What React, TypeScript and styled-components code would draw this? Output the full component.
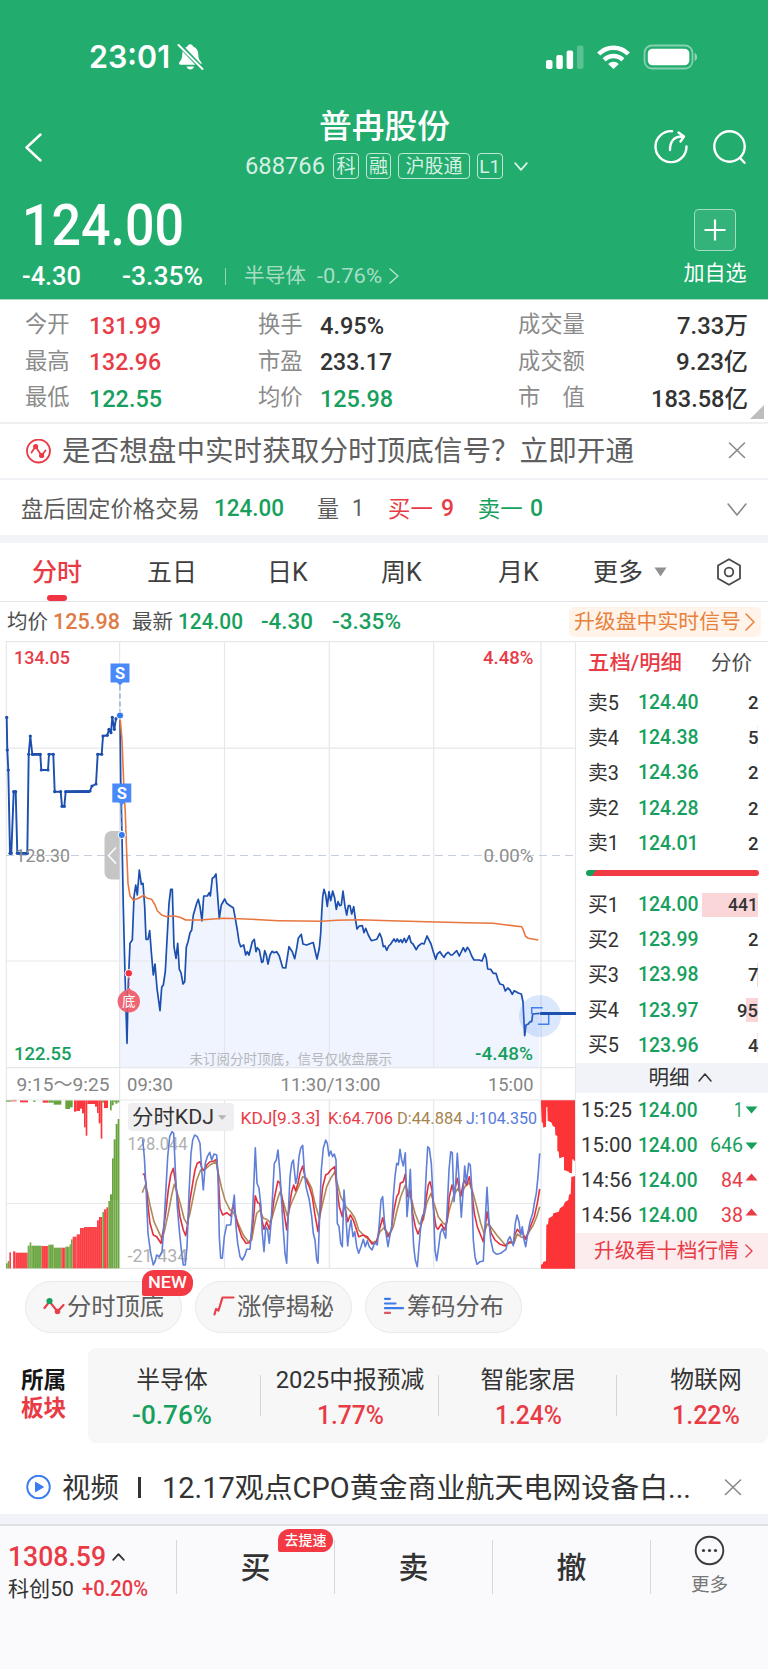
import React, { useLayoutEffect, useRef, useState } from "react";
import styled, { createGlobalStyle } from "styled-components";

const RED = "#e93b46";
const GREEN = "#17a05d";
const INK = "#333333";

const GlobalStyle = createGlobalStyle`
  * { box-sizing: border-box; }
  html, body { margin: 0; padding: 0; background: #fff; }
  body {
    width: 768px;
    font-family: Roboto, "Noto Sans CJK SC", sans-serif;
    color: ${INK};
    line-height: 1;
  }
`;

/* Condensed text: drawn in a box of a set width, glyphs squeezed to fill it. */
const FitBox = styled.span<{ $w: number; $size: number; $color?: string; $weight?: number }>`
  display: inline-block;
  flex: none;
  width: ${(p) => p.$w}px;
  font-size: ${(p) => p.$size}px;
  line-height: ${(p) => Math.round(p.$size * 1.2)}px;
  color: ${(p) => p.$color || "inherit"};
  font-weight: ${(p) => p.$weight || 400};
  white-space: nowrap;
`;
const FitInner = styled.span`
  display: inline-block;
  transform-origin: 0 50%;
`;

type FitProps = {
  w: number;
  size: number;
  color?: string;
  weight?: number;
  className?: string;
  children: React.ReactNode;
};

function Fit({ w, size, color, weight, className, children }: FitProps) {
  const ref = useRef<HTMLSpanElement>(null);
  const [scale, setScale] = useState(1);
  useLayoutEffect(() => {
    if (ref.current) {
      const natural = ref.current.getBoundingClientRect().width;
      if (natural > 0) setScale(w / natural);
    }
  }, [w]);
  return (
    <FitBox $w={w} $size={size} $color={color} $weight={weight} className={className}>
      <FitInner ref={ref} style={{ transform: `scaleX(${scale})` }}>
        {children}
      </FitInner>
    </FitBox>
  );
}

const Gap = styled.span<{ $w: number }>`
  flex: none;
  width: ${(p) => p.$w}px;
`;

const Page = styled.main`
  width: 768px;
  height: 1669px;
  display: flex;
  flex-direction: column;
  overflow: hidden;
  background: #fff;
`;

/* ---------- Header ---------- */

const Header = styled.header`
  height: 300px;
  flex: none;
  background: #22ac6e;
  color: #fff;
  border-bottom: 1px solid #a5dfc4;
`;
const StatusBar = styled.div`
  height: 100px;
  padding: 14px 70px 0 89px;
  display: flex;
  align-items: center;
`;
const Clock = styled(Fit)`
  font-family: Inter, sans-serif;
`;
const StatusIcons = styled.div`
  margin-left: auto;
  display: flex;
`;
const TitleBar = styled.div`
  height: 90px;
  display: grid;
  grid-template-columns: 120px 1fr 120px;
`;
const BackArea = styled.div`
  padding: 33px 0 0 25px;
`;
const TitleArea = styled.div`
  display: flex;
  flex-direction: column;
  align-items: center;
`;
const StockName = styled.div`
  height: 53px;
  display: flex;
  align-items: center;
`;
const CodeRow = styled.div`
  height: 26px;
  display: flex;
  align-items: center;
  color: rgba(255, 255, 255, 0.84);
  margin-left: 5px;
`;
const Tag = styled.span<{ $w: number }>`
  width: ${(p) => p.$w}px;
  height: 26px;
  margin-right: 7px;
  border: 1.4px solid rgba(255, 255, 255, 0.7);
  border-radius: 4px;
  display: flex;
  align-items: center;
  justify-content: center;
  font-size: 19px;
`;
const HeaderIcons = styled.div`
  padding: 28px 0 0 4px;
  display: flex;
  gap: 23px;
`;
const PriceBar = styled.div`
  height: 109px;
  padding: 3px 20px 0 22px;
  display: flex;
  justify-content: space-between;
`;
const PriceRow = styled.div`
  height: 69px;
  padding-bottom: 3px;
  display: flex;
  align-items: center;
`;
const ChangeRow = styled.div`
  height: 28px;
  display: flex;
  align-items: center;
`;
const Rule = styled.span<{ $w?: number; $h: number; $c: string }>`
  flex: none;
  width: ${(p) => p.$w || 1}px;
  height: ${(p) => p.$h}px;
  background: ${(p) => p.$c};
`;
const AddBox = styled.div`
  width: 66px;
  padding-top: 16px;
  display: flex;
  flex-direction: column;
  align-items: center;
  gap: 12px;
  font-size: 21px;
`;
const PlusButton = styled.div`
  width: 42px;
  height: 42px;
  border: 1.4px solid rgba(255, 255, 255, 0.55);
  border-radius: 5px;
  background: rgba(255, 255, 255, 0.08);
  display: flex;
  align-items: center;
  justify-content: center;
`;

/* ---------- Quote figures ---------- */

const Figures = styled.section`
  position: relative;
  height: 124px;
  flex: none;
  padding: 6px 20px 0 25px;
  border-bottom: 2px solid #eeeff1;
`;
const FigureRow = styled.div`
  height: 36.5px;
  display: grid;
  grid-template-columns: 64px 169px 62px 198px 68px 1fr;
  align-items: center;
`;
const FigureLabel = styled.span`
  font-size: 22.3px;
  line-height: 28px;
  color: #8b8b8b;
  white-space: pre;
`;
const FigureValue = styled.span<{ $c?: string; $end?: boolean }>`
  display: flex;
  align-items: center;
  justify-content: ${(p) => (p.$end ? "flex-end" : "flex-start")};
  padding-top: 3px;
  color: ${(p) => p.$c || INK};
`;
const Corner = styled.i`
  position: absolute;
  right: 4px;
  bottom: 3px;
  border: 7px solid transparent;
  border-right-color: #bdbdbd;
  border-bottom-color: #bdbdbd;
`;

const NoticeRow = styled.section`
  height: 56px;
  flex: none;
  padding: 0 22px 0 26px;
  display: flex;
  align-items: center;
  border-bottom: 2px solid #f1f2f5;
  font-size: 28.6px;
  color: #5f5f5f;
  svg:last-child { margin-left: auto; }
`;
const AfterHours = styled.section`
  height: 55px;
  flex: none;
  padding: 3px 21px 0;
  display: flex;
  align-items: center;
  font-size: 22.4px;
  color: #5c5c5c;
  svg { margin-left: auto; }
`;
const Band = styled.div<{ $h: number }>`
  height: ${(p) => p.$h}px;
  flex: none;
  background: #f2f3f8;
`;
const Tinted = styled.span<{ $c: string }>`
  color: ${(p) => p.$c};
`;

/* ---------- Tabs ---------- */

const Tabs = styled.nav`
  height: 59px;
  flex: none;
  padding-left: 32px;
  display: grid;
  grid-template-columns: 115px 120px 114px 117px 95px 123px 52px;
  border-bottom: 1px solid #e2e3e6;
  font-size: 25px;
  color: #3e3e3e;
`;
const Tab = styled.div<{ $active?: boolean }>`
  display: flex;
  flex-direction: column;
  justify-content: space-between;
  color: ${(p) => (p.$active ? RED : "inherit")};
  font-weight: ${(p) => (p.$active ? 500 : 400)};
`;
const TabLabel = styled.span`
  height: 58px;
  display: flex;
  align-items: center;
  gap: 11px;
  white-space: nowrap;
`;
const ActiveMark = styled.i`
  flex: none;
  width: 20px;
  height: 6px;
  margin: -6px 0 0 15px;
  border-radius: 3px;
  background: #f23343;
`;
const InfoRow = styled.div`
  height: 39px;
  flex: none;
  padding: 1px 7px 0;
  display: flex;
  align-items: center;
  font-size: 20.4px;
  color: #505050;
`;
const UpgradeTag = styled.span`
  margin-left: auto;
  width: 192px;
  height: 30px;
  padding-left: 5px;
  display: flex;
  align-items: center;
  gap: 4px;
  border-radius: 5px;
  background: #fff3ea;
  color: #e8813c;
  font-size: 20.8px;
  white-space: nowrap;
`;

/* ---------- Chart and order book ---------- */

const Board = styled.section`
  height: 628px;
  flex: none;
  display: flex;
`;
const Book = styled.aside`
  width: 192px;
  display: flex;
  flex-direction: column;
  border-top: 1px solid #e3e5e9;
`;
const BookHead = styled.div`
  height: 43px;
  padding: 0 16px 0 12px;
  display: flex;
  align-items: center;
  justify-content: space-between;
  font-size: 20.5px;
  color: #4a4a4a;
`;
const Levels = styled.div`
  padding-bottom: 9.5px;
`;
const Level = styled.div`
  height: 35.2px;
  padding-left: 12px;
  display: grid;
  grid-template-columns: 50px 64px 56px;
  align-items: center;
  font-size: 19.6px;
  line-height: 24px;
`;
const LevelSize = styled.span<{ $bar: number }>`
  height: 24px;
  display: flex;
  align-items: center;
  justify-content: flex-end;
  background: linear-gradient(#fbd6d9, #fbd6d9) right / ${(p) => p.$bar}px 100% no-repeat;
  font-size: 19px;
  font-weight: 500;
`;
const RatioBar = styled.div`
  height: 6px;
  flex: none;
  margin: 0 9px 10.5px 10px;
  border-radius: 3px;
  background: linear-gradient(125deg, ${GREEN} 0 8px, #f23a45 8.5px);
`;
const DetailHead = styled.div`
  height: 30px;
  flex: none;
  background: #f2f3f8;
  display: flex;
  align-items: center;
  justify-content: center;
  gap: 8px;
  padding-left: 16px;
  font-size: 20.5px;
`;
const Trade = styled.div<{ $c: string }>`
  height: 35.1px;
  flex: none;
  padding: 0 10px 0 5px;
  display: flex;
  align-items: center;
  color: ${(p) => p.$c};
`;
const TradeSize = styled.span<{ $up: boolean }>`
  flex: 1;
  display: flex;
  align-items: center;
  justify-content: flex-end;
  gap: 2px;
  svg { margin-bottom: ${(p) => (p.$up ? 7 : 0)}px; }
`;
const TenLevels = styled.div`
  flex: 1;
  padding-left: 18px;
  display: flex;
  align-items: center;
  gap: 6px;
  background: #fdecee;
  color: ${RED};
  font-size: 20.7px;
`;

/* ---------- Shortcuts, sectors, video ---------- */

const Chips = styled.section`
  height: 79px;
  flex: none;
  padding: 12px 25px 0;
  display: flex;
  gap: 13px;
`;
const Chip = styled.div`
  position: relative;
  width: 157px;
  height: 52px;
  padding: 0 0 0 17px;
  display: flex;
  align-items: center;
  gap: 2px;
  border: 1.5px solid #eaeaea;
  border-radius: 26px;
  background: #f7f7f7;
  font-size: 24px;
  color: #5d5d5d;
  white-space: nowrap;
  > svg { margin-bottom: 2px; }
`;
const Flag = styled.b<{ $x: number; $y: number; $w: number; $h: number }>`
  position: absolute;
  left: ${(p) => p.$x}px;
  top: ${(p) => p.$y}px;
  width: ${(p) => p.$w}px;
  height: ${(p) => p.$h}px;
  display: flex;
  align-items: center;
  justify-content: center;
  border-radius: 12px 12px 12px 2px;
  background: #f33943;
  color: #fff;
  font-weight: 500;
`;
const Sectors = styled.section`
  height: 95px;
  flex: none;
  display: flex;
`;
const SectorTitle = styled.h2`
  width: 88px;
  flex: none;
  margin: 0;
  padding: 19px 0 0 21px;
  font-size: 22.6px;
  line-height: 28px;
  font-weight: 700;
  color: #151515;
`;
const SectorList = styled.div`
  width: 680px;
  flex: none;
  overflow: hidden;
  display: grid;
  grid-template-columns: 173px 178px 178px 178px;
  background: #f7f7f7;
  border-radius: 8px;
`;
const Sector = styled.div`
  padding-top: 18px;
  display: flex;
  flex-direction: column;
  align-items: center;
  gap: 7px;
  font-size: 23.8px;
  line-height: 28px;
  background: linear-gradient(#d4d4d4, #d4d4d4) 100% 27px / 1px 41px no-repeat;
  white-space: nowrap;
  &:first-child { padding-right: 5px; }
  &:last-child { background: none; }
`;
const VideoRow = styled.section`
  height: 71px;
  flex: none;
  padding: 18px 26px 0 26px;
  display: flex;
  align-items: center;
  font-size: 28.6px;
  color: #333;
  white-space: nowrap;
  svg:last-child { margin-left: auto; }
`;

/* ---------- Bottom bar ---------- */

const BottomBar = styled.footer`
  flex: 1;
  padding-top: 14px;
  display: flex;
  align-items: flex-start;
  background: #fafafd;
  border-top: 2px solid #dfe0e5;
`;
const IndexCell = styled.div`
  width: 176px;
  padding: 1px 0 0 8px;
`;
const IndexLine = styled.div<{ $h: number }>`
  height: ${(p) => p.$h}px;
  display: flex;
  align-items: center;
`;
const Action = styled.div`
  position: relative;
  width: 158px;
  height: 54px;
  padding-top: 2px;
  display: flex;
  align-items: center;
  justify-content: center;
  border-left: 1px solid #d8d8dc;
  font-size: 30px;
  font-weight: 500;
`;
const More = styled.div`
  width: 118px;
  height: 54px;
  display: flex;
  flex-direction: column;
  align-items: center;
  gap: 10px;
  border-left: 1px solid #d8d8dc;
  font-size: 18.6px;
  color: #777;
  svg { margin-top: -5px; flex: none; }
`;

/* ---------- Small line icons ---------- */

type ChevronProps = { w: number; h: number; dir: "left" | "right" | "up" | "down"; sw?: number; color?: string };
function Chevron({ w, h, dir, sw = 2, color = "currentColor" }: ChevronProps) {
  const p = sw / 2 + 0.3;
  const d = {
    left: `M${w - p} ${p}L${p} ${h / 2}L${w - p} ${h - p}`,
    right: `M${p} ${p}L${w - p} ${h / 2}L${p} ${h - p}`,
    up: `M${p} ${h - p}L${w / 2} ${p}L${w - p} ${h - p}`,
    down: `M${p} ${p}L${w / 2} ${h - p}L${w - p} ${p}`,
  }[dir];
  return (
    <svg width={w} height={h} fill="none" stroke={color} strokeWidth={sw} strokeLinecap="round" strokeLinejoin="round">
      <path d={d} />
    </svg>
  );
}

function Cross() {
  return (
    <svg width="18" height="18" stroke="#8a8a8a" strokeWidth="1.6" strokeLinecap="round">
      <path d="M1.5 1L16.5 15.5M16.5 1L1.5 15.5" />
    </svg>
  );
}

/* ---------- Chart series ---------- */

type Pt = [number, number];
const parse = (s: string): Pt[] => s.trim().split(/\s+/).map((p) => p.split(",").map(Number) as Pt);

/* Samples are stored in thirds of a pixel, relative to the origin of each pane. */
const place = (s: string, ox: number, oy: number) =>
  parse(s).map(([x, y]) => `${(ox + x / 3).toFixed(1)},${(oy + y / 3).toFixed(1)}`).join(" ");

const PRE_OPEN = place(
  "20,232 22,330 25,390 30,640 34,640 41,455 47,455 52,640 82,640 86,343 91,288 97,343 121,343 124,390 144,390 147,343 160,343 164,455 182,455 186,499 193,499 197,455 270,453 276,438 288,432 293,343 305,343 309,288 322,286 327,268 333,278 337,232 343,268 348,236 360,226",
  0, 640
);
const PRICE =
  place(
    "360,226 362,420 366,590 370,800 375,1000 381,1210 385,1030 390,910 397,900 402,770 407,735 412,765 418,690 424,733 429,730 434,800 438,898 444,898 449,872 454,935 460,1005 465,972 471,1045 480,1112 485,1042 490,1035 496,995 501,900 507,790 512,748 517,748 522,920 528,955 533,910 538,988 543,998 549,1032 554,1025 559,922 564,905 570,878 575,870 580,825 585,808 590,790 595,778 600,800 606,843 611,768 622,768 628,758 631,768 637,715 642,712 648,702 653,770 658,836 664,795 674,777 680,790 690,797 700,803 706,835 712,870 717,905 722,920 731,915 737,945 742,935 747,945 752,925 757,905 763,898 768,935 772,923 778,930 785,967 789,965 794,932 799,945 804,972 810,945 816,934 822,938 830,935 838,948",
    0, 640
  ) +
  " " +
  place(
    "8,983 17,984 27,920 37,935 44,956 50,925 55,895 64,883 69,912 80,915 95,909 100,908 106,935 111,957 118,925 122,880 125,820 128,770 132,748 137,765 142,799 147,755 152,782 158,753 164,775 169,808 174,785 179,797 184,795 189,753 195,800 200,825 205,797 210,797 215,822 221,800 226,835 231,867 238,858 247,857 252,878 257,865 265,885 274,902 290,898 299,880 305,895 310,920 315,918 320,931 326,918 332,912 342,897 347,905 352,897 357,906 362,899 367,908 373,895 378,907 388,887 393,907 399,912 409,929 415,918 425,910 432,912 441,888 447,900 453,912 460,935 467,958 472,942 480,935 486,945 492,952 498,942 505,937 512,945 517,945 530,932 538,948 550,923 556,935 562,922 568,930 575,948 582,960 598,960 606,963 614,941 619,955 623,987 632,988 640,1000 648,1000 655,1022 660,1032 670,1035 676,1053 683,1044 690,1050 697,1063 703,1052 715,1059 724,1062 729,1085 734,1187 738,1155 745,1152 750,1145 755,1145 758,1122 778,1120",
    280, 640
  );
const AVERAGE =
  place(
    "360,230 366,300 371,430 376,520 380,640 384,730 390,768 400,780 412,776 424,770 432,766 440,774 455,778 465,795 472,812 485,825 500,830 520,827 540,832 557,840 600,840 670,835 720,836 780,839 835,842",
    0, 640
  ) +
  " " +
  place("0,842 125,844 170,841 240,839 330,842 440,845 560,848 640,850 680,855 725,860 730,870 736,888 745,895 775,900", 280, 640);

const LINE_J =
  place(
    "428,178 433,230 438,320 444,460 452,520 460,555 465,545 470,525 478,530 486,515 491,450 497,340 503,230 509,170 516,155 521,160 526,270 532,380 538,450 544,510 550,555 556,555 561,500 567,340 573,220 578,180 584,165 592,170 600,190 605,270 610,330 616,250 622,230 629,217 635,240 642,222 650,225 654,290 658,470 662,535 667,535 673,470 680,435 692,435 697,390 703,345 708,440 713,490 720,530 727,540 735,525 740,508 750,508 757,420 762,300 766,203 771,310 777,325 783,380 787,460 792,515 797,440 803,450 808,490 813,430 818,340 823,250 829,240 834,210 840,280 845,370 850,450 855,520",
    0, 1080
  ) +
  " " +
  place(
    "20,550 25,400 30,290 35,250 40,240 47,310 52,290 57,230 62,205 68,196 73,270 78,320 88,360 95,410 100,460 105,480 110,540 114,550 119,400 124,270 130,205 137,180 142,190 147,228 152,213 158,230 163,222 168,240 172,430 177,440 182,490 187,500 192,330 197,400 203,498 208,450 213,420 219,470 224,455 230,500 236,520 243,500 250,478 256,500 262,482 268,500 276,510 284,488 292,495 298,430 303,360 308,350 313,420 318,460 324,500 330,465 335,440 340,350 345,290 350,250 355,255 360,208 365,240 370,258 376,218 381,410 386,350 391,268 396,400 401,500 406,540 412,560 418,490 424,420 428,405 433,400 438,290 443,200 448,205 454,250 459,350 465,510 470,542 476,500 481,460 487,445 492,460 497,475 502,380 507,270 512,215 517,218 522,365 527,310 532,220 538,310 544,412 549,340 554,258 559,310 566,250 571,255 575,320 580,480 585,530 591,553 600,545 610,543 616,420 621,322 626,410 632,480 640,515 650,523 662,520 678,508 684,480 690,470 700,497 706,430 711,405 717,425 722,465 727,440 731,475 737,500 742,470 750,425 758,400 763,370 769,340 774,290 779,220",
    280, 1080
  );
const LINE_K =
  place(
    "428,283 433,282 438,310 443,370 450,430 460,465 470,470 483,490 490,450 497,400 505,330 512,285 520,265 527,310 533,360 540,410 550,450 557,467 563,430 570,360 578,310 585,270 592,250 600,245 606,265 612,272 620,255 630,245 642,243 650,238 655,290 660,385 668,405 680,398 692,408 700,375 706,400 713,435 725,470 738,490 750,488 757,450 762,400 766,347 773,368 779,370 786,420 792,448 800,425 808,448 815,410 822,360 830,320 834,303 840,310 848,370",
    0, 1080
  ) +
  " " +
  place(
    "20,450 28,380 35,335 41,315 47,333 54,310 60,280 68,258 76,295 88,320 97,350 104,400 114,455 120,400 128,320 137,285 145,280 152,270 164,260 170,320 178,380 187,410 193,370 203,425 211,405 220,420 228,445 236,470 250,465 262,470 276,492 290,485 298,450 308,413 316,450 324,470 334,450 342,390 350,350 356,340 361,310 370,305 376,282 382,350 391,330 398,400 406,440 414,462 422,440 430,410 438,360 445,315 450,305 456,330 462,400 468,440 474,448 484,432 494,450 502,420 508,350 516,315 522,340 532,295 542,350 552,300 560,315 568,290 575,330 583,400 592,440 610,485 616,440 621,395 627,430 634,460 645,480 660,493 676,498 690,485 700,490 706,460 712,448 720,458 726,455 737,478 745,455 755,430 763,410 772,370 779,327",
    280, 1080
  );
const LINE_D =
  place(
    "427,338 436,315 443,340 450,375 462,425 485,475 493,455 505,400 515,345 523,312 532,340 542,375 552,415 561,432 570,400 580,350 590,300 602,270 615,268 630,255 648,245 655,280 665,325 675,360 690,390 700,395 712,425 730,465 745,485 755,480 762,440 770,400 780,390 790,415 800,418 812,428 820,400 830,365 840,335 850,365",
    0, 1080
  ) +
  " " +
  place(
    "22,408 32,375 45,345 56,320 68,290 80,295 95,325 105,370 118,415 128,370 140,320 152,295 165,275 172,310 182,350 198,380 212,395 225,415 236,450 255,470 278,488 290,482 300,455 312,443 328,465 340,440 350,395 362,350 376,315 385,340 395,360 405,400 418,432 430,420 440,370 453,340 462,370 475,410 490,430 498,435 508,390 520,350 533,325 543,345 555,320 568,308 578,335 590,380 602,430 612,460 622,432 632,440 650,465 676,495 690,488 702,490 712,462 722,470 735,475 748,455 760,435 770,410 779,380",
    280, 1080
  );

/* Auction volume, as [from, to, level, is-up] runs in thirds of a pixel. */
type Run = [number, number, number, 0 | 1];
const VOLUME: Run[] = [
  [18, 23, 550, 0], [23, 28, 543, 0], [28, 33, 517, 1], [39, 46, 514, 1], [46, 83, 518, 1], [83, 89, 497, 0],
  [89, 94, 487, 0], [94, 125, 497, 0], [125, 145, 498, 1], [145, 161, 494, 0], [161, 184, 503, 0], [184, 196, 503, 1],
  [196, 209, 500, 0], [209, 213, 493, 0], [213, 218, 478, 0], [218, 230, 470, 1], [230, 240, 463, 1], [240, 252, 444, 1],
  [252, 291, 441, 1], [291, 297, 421, 1], [297, 307, 411, 1], [307, 312, 396, 0], [312, 319, 388, 1], [319, 325, 382, 1],
  [325, 330, 363, 0], [330, 336, 343, 0], [336, 341, 235, 0], [341, 347, 178, 0], [347, 353, 132, 0], [353, 358, 117, 0],
];
const UNMATCHED: Run[] = [
  [18, 33, 65, 0], [33, 50, 64, 1], [60, 84, 67, 1], [100, 106, 66, 0], [128, 145, 68, 1], [145, 161, 68, 0],
  [161, 184, 74, 0], [196, 210, 87, 0], [210, 218, 82, 0], [222, 229, 95, 1], [229, 240, 93, 1], [240, 246, 86, 1],
  [246, 252, 100, 1], [252, 257, 142, 1], [257, 262, 167, 1], [262, 285, 72, 1], [285, 291, 80, 1], [291, 296, 99, 1],
  [296, 302, 130, 1], [302, 307, 176, 1], [307, 312, 68, 0], [312, 324, 84, 1], [330, 335, 91, 0], [335, 341, 76, 0],
  [341, 346, 66, 0], [346, 352, 71, 0], [352, 358, 67, 0],
];

type LabelProps = { x: number; y: number; w: number; size?: number; c: string; weight?: number; children: string };
function Label({ x, y, w, size = 19, c, weight = 400, children }: LabelProps) {
  return (
    <text x={x} y={y} textLength={w} lengthAdjust="spacingAndGlyphs" fontSize={size} fill={c} fontWeight={weight}>
      {children}
    </text>
  );
}

const PlotSvg = styled.svg`
  display: block;
  flex: none;
  font-family: Roboto, "Noto Sans CJK SC", sans-serif;
`;

function SellMark({ x, y, dotX, dotY }: { x: number; y: number; dotX: number; dotY: number }) {
  return (
    <g>
      <path d={`M${dotX} ${y + 22}V${dotY}`} stroke="#6d8cc8" strokeWidth="1" strokeDasharray="5 3" />
      <path d={`M${x} ${y}h19v19h-6.5l-3 3l-3 -3h-6.5z`} fill="#4a8af8" />
      <text x={x + 9.5} y={y + 15.2} textAnchor="middle" fontSize="16.5" fontWeight="700" fill="#fff">S</text>
      <circle cx={dotX} cy={dotY} r="3.6" fill="#3478f0" stroke="#fff" strokeWidth="1" />
    </g>
  );
}

function Plot() {
  const grid = "#e6e7ea";
  return (
    <PlotSvg width="576" height="628" viewBox="0 641 576 628">
      <polygon points={`${PRICE} 539.3,1067 120,1067`} fill="#eff4fe" />
      <g stroke={grid} strokeWidth="1.2" fill="none">
        <path d="M6 641.6H576M6 748.2H575.5M6 961H575.5M6 1067.6H575.5M6 1100H575.5M6 1203.5H541M6 1268.3H575.5" />
        <path d="M6.3 641V1268M119.6 641V1268M224.5 641V1068M329.3 641V1068M433.7 641V1068M541 641V1268M575.5 641V1268" />
        <path d="M224.5 1100V1268M329.3 1100V1268M433.7 1100V1268" />
      </g>
      <path d="M6 855.5H575" stroke="#c6cddb" strokeWidth="1.2" strokeDasharray="8 5" />

      <Label x={14} y={663.6} w={56} c={RED} weight={500}>134.05</Label>
      <Label x={483} y={663.6} w={50.5} c={RED} weight={500}>4.48%</Label>
      <Label x={483.5} y={862.2} w={50} c="#8d8d8d">0.00%</Label>
      <Label x={14} y={1059.8} w={57.5} c={GREEN} weight={500}>122.55</Label>
      <Label x={475} y={1059.8} w={58} c={GREEN} weight={500}>-4.48%</Label>
      <Label x={189.5} y={1064} w={202.5} size={13.8} c="#b5b7bc">未订阅分时顶底，信号仅收盘展示</Label>

      <polyline points={PRE_OPEN} fill="none" stroke="#1c4fae" strokeWidth="1.9" strokeLinejoin="round" />
      <g fill="#1c4fae">
        {PRE_OPEN.split(" ").map((p, i) => {
          const [x, y] = p.split(",");
          return <circle key={i} cx={x} cy={y} r="1.6" />;
        })}
      </g>
      <path d="M32.500 754.300H40M66 791.700H90M17.500 853.300H27.300" stroke="#1c4fae" strokeWidth="2.800" />
      <Label x={15.5} y={862.2} w={54.5} c="#8d8d8d">128.30</Label>

      <path d="M119.6 831V879.5H111.5a7 7 0 0 1 -7 -7V838a7 7 0 0 1 7 -7z" fill="#c5c5c5" />
      <path d="M116 847.5L108.5 855.5L116 863.5" fill="none" stroke="#fff" strokeWidth="1.5" />

      <polyline points={PRICE} fill="none" stroke="#1c4fae" strokeWidth="1.7" strokeLinejoin="round" />
      <polyline points={AVERAGE} fill="none" stroke="#e9763f" strokeWidth="1.6" strokeLinejoin="round" />

      <SellMark x={110.5} y={663.5} dotX={120} dotY={715.5} />
      <SellMark x={112.3} y={783.5} dotX={121.8} dotY={835} />

      <path d="M128.8 976V990" stroke="#b8467a" strokeWidth="1.2" strokeDasharray="4 2" />
      <path d="M124.5 992L128.8 987.5L133.2 992z" fill="#ef6673" />
      <circle cx="128.8" cy="1001.3" r="11.2" fill="#ef6673" />
      <path d="M127.3 991V1012" stroke="#6b3f86" strokeWidth="1.2" opacity="0.35" />
      <text x="128.8" y="1006.3" textAnchor="middle" fontSize="13.5" fill="#fff">底</text>
      <circle cx="128.8" cy="973.3" r="3.8" fill="#f03040" stroke="#fff" strokeWidth="1" />

      <circle cx="540" cy="1016" r="21" fill="#5b92f5" opacity="0.22" />
      <path d="M542.7 1007.7H531.7V1014M538 1024.3H548.7V1014" fill="none" stroke="#3f7fee" strokeWidth="1.5" />
      <path d="M541 1013.6H575" stroke="#1c4fae" strokeWidth="3" strokeLinecap="round" />

      <Label x={16.5} y={1091} w={93} c="#858585">9:15～9:25</Label>
      <Label x={127} y={1091} w={46} c="#858585">09:30</Label>
      <Label x={280.5} y={1091} w={100} c="#858585">11:30/13:00</Label>
      <Label x={488} y={1091} w={45.5} c="#858585">15:00</Label>

      {VOLUME.map(([a, b, v, up], i) => (
        <rect key={i} x={a / 3} y={1080 + v / 3} width={(b - a) / 3} height={(565 - v) / 3} fill={up ? "#fb373d" : "#67a43c"} />
      ))}
      <g stroke="#fff" strokeWidth="0.5" opacity="0.3">
        {Array.from({ length: 59 }, (_, i) => (
          <path key={i} d={`M${7.9 + i * 1.89} 1200V1268`} />
        ))}
      </g>
      {UNMATCHED.map(([a, b, v, up], i) => (
        <rect key={i} x={a / 3} y={1100.5} width={(b - a) / 3} height={(v - 61.5) / 3} fill={up ? "#fb373d" : "#67a43c"} />
      ))}

      <polygon
        fill="#fd3437"
        points={place("783,61 885,61 885,242 881,242 880,238 877,238 876,280 868,278 866,275 852,270 852,230 838,235 836,215 832,212 832,168 826,165 825,142 818,138 815,128 803,122 802,80 799,82 798,140 790,143 788,128 785,127 783,75", 280, 1080)}
      />
      <polygon
        fill="#fd3437"
        points={place("885,288 874,291 872,342 867,344 865,360 855,366 850,378 840,385 836,395 820,400 818,408 806,415 804,432 799,435 798,543 789,546 788,552 783,554 783,566 885,566", 280, 1080)}
      />

      <Label x={127.5} y={1150.3} w={60} size={17.5} c="#b0b0b0">128.044</Label>
      <Label x={127.5} y={1261.8} w={60} size={17.5} c="#b0b0b0">-21.434</Label>
      <g fill="none" strokeWidth="1.6" strokeLinejoin="round">
        <polyline points={LINE_D} stroke="#ad8a57" />
        <polyline points={LINE_K} stroke="#e0303c" />
        <polyline points={LINE_J} stroke="#5f7fd8" />
      </g>

      <rect x="128" y="1103" width="106" height="28" rx="4" fill="#efeff1" />
      <Label x={132} y={1124} w={82} size={21} c="#333">分时KDJ</Label>
      <path d="M218 1115.3H226.4L222.2 1120z" fill="#b5b5b5" />
      <Label x={240.5} y={1124.3} w={79.5} size={17.2} c={RED}>KDJ[9.3.3]</Label>
      <Label x={328} y={1124.3} w={65} size={17.2} c={RED}>K:64.706</Label>
      <Label x={397} y={1124.3} w={65.5} size={17.2} c="#a5844f">D:44.884</Label>
      <Label x={466} y={1124.3} w={71} size={17.2} c="#5579dc">J:104.350</Label>
    </PlotSvg>
  );
}

/* ---------- Data ---------- */

type Level5 = [string, string, string, number, number];
const ASKS: Level5[] = [
  ["卖5", "124.40", "2", 10.5, 0],
  ["卖4", "124.38", "5", 10.5, 0.6],
  ["卖3", "124.36", "2", 10.5, 0],
  ["卖2", "124.28", "2", 10.5, 0],
  ["卖1", "124.01", "2", 10.5, 0],
];
const BIDS: Level5[] = [
  ["买1", "124.00", "441", 30, 56],
  ["买2", "123.99", "2", 10.5, 0],
  ["买3", "123.98", "7", 10.5, 1],
  ["买4", "123.97", "95", 21, 12],
  ["买5", "123.96", "4", 10.5, 0.7],
];
const TRADES: [string, string, number, boolean][] = [
  ["15:25", "1", 9, false],
  ["15:00", "646", 33, false],
  ["14:56", "84", 22, true],
  ["14:56", "38", 22, true],
];
const SECTORS: [string, string, number, string][] = [
  ["半导体", "-0.76%", 80, GREEN],
  ["2025中报预减", "1.77%", 67, RED],
  ["智能家居", "1.24%", 67, RED],
  ["物联网", "1.22%", 68, RED],
];

function LevelRows({ rows }: { rows: Level5[] }) {
  return (
    <>
      {rows.map(([name, price, size, w, bar]) => (
        <Level key={name}>
          <Fit w={31} size={20}>{name}</Fit>
          <Fit w={60.5} size={20.5} color={GREEN} weight={500}>{price}</Fit>
          <LevelSize $bar={bar}>
            <Fit w={w} size={19} weight={500}>{size}</Fit>
          </LevelSize>
        </Level>
      ))}
    </>
  );
}

export default function App() {
  return (
    <>
      <GlobalStyle />
      <Page>
        <Header>
          <StatusBar>
            <Clock w={81} size={31.5} weight={600}>23:01</Clock>
            <Gap $w={7} />
            <svg width="27" height="28" viewBox="0 0 27 28">
              <path d="M13.2 1.2c-1.5 0-2.6 1-2.8 2.4C7 4.7 5.2 7.7 5.2 11.5c0 4.2-1.2 6-2.7 7.6-.9 1-.5 2.7 1 2.7h19.6c1.5 0 1.900-1.7 1-2.7-1.5-1.600-2.800-3.400-2.800-7.600 0-3.800-1.700-6.800-5.200-7.900-.2-1.400-1.400-2.400-2.900-2.400zM9.600 23.600c.5 1.800 1.900 3 3.700 3s3.200-1.200 3.700-3z" fill="#fff" />
              <path d="M3 2.500L26 26.500" stroke="#22ac6e" strokeWidth="4.600" />
              <path d="M1.500 2L25.500 26" stroke="#fff" strokeWidth="2" strokeLinecap="round" />
            </svg>
            <StatusIcons>
              <svg width="152" height="26" viewBox="0 0 152 26">
                <g fill="#fff">
                  <rect x="0" y="16" width="6.500" height="9" rx="2" />
                  <rect x="10.300" y="11" width="6.500" height="14" rx="2" />
                  <rect x="20.600" y="6.500" width="6.500" height="18.500" rx="2" />
                  <rect x="31" y="1.500" width="6.500" height="23.500" rx="2" opacity="0.25" />
                </g>
                <g fill="none" stroke="#fff" strokeWidth="4.400">
                  <path d="M52.700 10.100a20.500 20.500 0 0 1 29.600 0" />
                  <path d="M58.200 15.900a13 13 0 0 1 18.600 0" />
                </g>
                <path d="M67.500 25L62.200 20a7.500 7.500 0 0 1 10.600 0z" fill="#fff" />
                <rect x="98.500" y="1.500" width="48" height="23" rx="7.500" fill="none" stroke="#fff" strokeOpacity="0.45" strokeWidth="1.800" />
                <rect x="101.800" y="4.700" width="41.500" height="16.600" rx="4.800" fill="#fff" />
                <path d="M148.600 9v8c1.600-.6 2.500-2.200 2.500-4s-.9-3.400-2.500-4z" fill="#fff" opacity="0.5" />
              </svg>
            </StatusIcons>
          </StatusBar>
          <TitleBar>
            <BackArea><Chevron w={17} h={29} dir="left" sw={2.4} /></BackArea>
            <TitleArea>
              <StockName><Fit w={131} size={33} weight={500}>普冉股份</Fit></StockName>
              <CodeRow>
                <Fit w={80} size={24}>688766</Fit>
                <Gap $w={8} />
                <Tag $w={25.5}>科</Tag>
                <Tag $w={25.5}>融</Tag>
                <Tag $w={71.5}>沪股通</Tag>
                <Tag $w={26}>L1</Tag>
                <Gap $w={4} />
                <Chevron w={14} h={9} dir="down" sw={1.7} />
              </CodeRow>
            </TitleArea>
            <HeaderIcons>
              <svg width="37" height="38" viewBox="0 0 37 38" fill="none" stroke="#fff" strokeWidth="2.400" strokeLinecap="round" strokeLinejoin="round">
                <path d="M20 3.200A15.500 15.500 0 1 0 34.500 18.500" />
                <path d="M18 22c0-8 3.500-13.500 12-13.500M26.500 4.500L32 8.500L28.500 13.500" />
              </svg>
              <svg width="37" height="38" viewBox="0 0 37 38" fill="none" stroke="#fff" strokeWidth="2.400" strokeLinecap="round">
                <circle cx="17.500" cy="18.500" r="15.200" />
                <path d="M28.500 30.500L32.500 34.800" />
              </svg>
            </HeaderIcons>
          </TitleBar>
          <PriceBar>
            <div>
              <PriceRow><Fit w={162} size={57} weight={500}>124.00</Fit></PriceRow>
              <ChangeRow>
                <Fit w={59} size={25.5} weight={500}>-4.30</Fit>
                <Gap $w={41} />
                <Fit w={81} size={25.5} weight={500}>-3.35%</Fit>
                <Gap $w={22} />
                <Rule $h={17} $c="rgba(255,255,255,.5)" />
                <Gap $w={18} />
                <Fit w={62} size={20.5} color="rgba(255,255,255,.62)">半导体</Fit>
                <Gap $w={11} />
                <Fit w={65} size={20.5} color="rgba(255,255,255,.62)">-0.76%</Fit>
                <Gap $w={7} />
                <Chevron w={10} h={16} dir="right" sw={1.5} color="rgba(255,255,255,.65)" />
              </ChangeRow>
            </div>
            <AddBox>
              <PlusButton>
                <svg width="22" height="22" stroke="#fff" strokeWidth="2.200"><path d="M0.500 11H21.500M11 0.500V21.500" /></svg>
              </PlusButton>
              <span>加自选</span>
            </AddBox>
          </PriceBar>
        </Header>

        <Figures>
          <FigureRow>
            <FigureLabel>今开</FigureLabel>
            <FigureValue $c={RED}><Fit w={72} size={23.5} weight={500}>131.99</Fit></FigureValue>
            <FigureLabel>换手</FigureLabel>
            <FigureValue><Fit w={64} size={23.5} weight={500}>4.95%</Fit></FigureValue>
            <FigureLabel>成交量</FigureLabel>
            <FigureValue $end><Fit w={71} size={23.5} weight={500}>7.33万</Fit></FigureValue>
          </FigureRow>
          <FigureRow>
            <FigureLabel>最高</FigureLabel>
            <FigureValue $c={RED}><Fit w={72} size={23.5} weight={500}>132.96</Fit></FigureValue>
            <FigureLabel>市盈</FigureLabel>
            <FigureValue><Fit w={72} size={23.5} weight={500}>233.17</Fit></FigureValue>
            <FigureLabel>成交额</FigureLabel>
            <FigureValue $end><Fit w={72} size={23.5} weight={500}>9.23亿</Fit></FigureValue>
          </FigureRow>
          <FigureRow>
            <FigureLabel>最低</FigureLabel>
            <FigureValue $c={GREEN}><Fit w={73} size={23.5} weight={500}>122.55</Fit></FigureValue>
            <FigureLabel>均价</FigureLabel>
            <FigureValue $c={GREEN}><Fit w={73} size={23.5} weight={500}>125.98</Fit></FigureValue>
            <FigureLabel>市　值</FigureLabel>
            <FigureValue $end><Fit w={97} size={23.5} weight={500}>183.58亿</Fit></FigureValue>
          </FigureRow>
          <Corner />
        </Figures>

        <NoticeRow>
          <svg width="25" height="25" fill="none" stroke={RED} strokeWidth="1.800" strokeLinecap="round">
            <circle cx="12.500" cy="12" r="11.500" />
            <path d="M5.500 13.500L9.500 7.500L15.500 16.500L19.500 11.500" />
            <circle cx="9.600" cy="7.500" r="1.700" fill={RED} />
            <circle cx="15.600" cy="16.500" r="1.700" fill={RED} />
          </svg>
          <Gap $w={11} />
          <Fit w={572} size={28.6}>是否想盘中实时获取分时顶底信号？立即开通</Fit>
          <Cross />
        </NoticeRow>
        <AfterHours>
          <Fit w={179} size={22.4}>盘后固定价格交易</Fit>
          <Gap $w={14} />
          <Fit w={70} size={23} color={GREEN} weight={500}>124.00</Fit>
          <Gap $w={33} />
          <Fit w={22} size={22.4}>量</Fit>
          <Gap $w={13} />
          <Fit w={12} size={23}>1</Fit>
          <Gap $w={24} />
          <Tinted $c={RED}>买一</Tinted>
          <Gap $w={8} />
          <Fit w={13} size={23} color={RED} weight={500}>9</Fit>
          <Gap $w={24} />
          <Tinted $c={GREEN}>卖一</Tinted>
          <Gap $w={7} />
          <Fit w={13} size={23} color={GREEN} weight={500}>0</Fit>
          <Chevron w={20} h={13} dir="down" sw={1.6} color="#888" />
        </AfterHours>
        <Band $h={8} />

        <Tabs>
          <Tab $active>
            <TabLabel>分时</TabLabel>
            <ActiveMark />
          </Tab>
          <Tab><TabLabel>五日</TabLabel></Tab>
          <Tab><TabLabel>日K</TabLabel></Tab>
          <Tab><TabLabel>周K</TabLabel></Tab>
          <Tab><TabLabel>月K</TabLabel></Tab>
          <Tab>
            <TabLabel>
              更多
              <svg width="13" height="10"><path d="M0.500 0.500H12.500L6.500 9.500z" fill="#909090" /></svg>
            </TabLabel>
          </Tab>
          <Tab>
            <TabLabel>
              <svg width="26" height="28" fill="none" stroke="#4a4a4a" strokeWidth="1.800" strokeLinejoin="round">
                <path d="M13 1.200L24 7.500V20.500L13 26.800L2 20.500V7.500z" />
                <circle cx="13" cy="14" r="4.300" />
              </svg>
            </TabLabel>
          </Tab>
        </Tabs>
        <InfoRow>
          <Fit w={41} size={20.5}>均价</Fit>
          <Gap $w={5} />
          <Fit w={67} size={21.5} color="#e07b45" weight={500}>125.98</Fit>
          <Gap $w={12} />
          <Fit w={41} size={20.5}>最新</Fit>
          <Gap $w={5} />
          <Fit w={65} size={21.5} color={GREEN} weight={500}>124.00</Fit>
          <Gap $w={18} />
          <Fit w={52} size={21.5} color={GREEN} weight={500}>-4.30</Fit>
          <Gap $w={19} />
          <Fit w={69} size={21.5} color={GREEN} weight={500}>-3.35%</Fit>
          <UpgradeTag>
            <Fit w={167} size={20.8}>升级盘中实时信号</Fit>
            <Chevron w={10} h={18} dir="right" sw={1.5} />
          </UpgradeTag>
        </InfoRow>

        <Board>
          <Plot />
          <Book>
            <BookHead>
              <Fit w={94} size={20.5} color={RED} weight={500}>五档/明细</Fit>
              <Fit w={41} size={20.5}>分价</Fit>
            </BookHead>
            <Levels><LevelRows rows={ASKS} /></Levels>
            <RatioBar />
            <LevelRows rows={BIDS} />
            <DetailHead>
              明细
              <Chevron w={14} h={9} dir="up" sw={1.5} />
            </DetailHead>
            {TRADES.map(([time, size, w, up], i) => (
              <Trade key={i} $c={up ? RED : GREEN}>
                <Fit w={51} size={20.5} color={INK}>{time}</Fit>
                <Gap $w={6} />
                <Fit w={59.5} size={20.5} color={GREEN} weight={500}>{"124.00"}</Fit>
                <TradeSize $up={up}>
                  <Fit w={w} size={20.5}>{size}</Fit>
                  <svg width="13" height="8"><path d={up ? "M0.500 7.500H12.500L6.500 0.500z" : "M0.500 0.500H12.500L6.500 7.500z"} fill="currentColor" /></svg>
                </TradeSize>
              </Trade>
            ))}
            <TenLevels>
              <Fit w={145} size={20.7}>升级看十档行情</Fit>
              <Chevron w={8} h={14} dir="right" sw={1.3} />
            </TenLevels>
          </Book>
        </Board>

        <Chips>
          <Chip>
            <svg width="22" height="18" fill="none" stroke="#e8404a" strokeWidth="2.200" strokeLinecap="round">
              <path d="M1.500 11L6.500 4.500L14.500 14.500L20.500 8" />
              <circle cx="6.500" cy="4" r="2" fill={GREEN} stroke={GREEN} />
              <circle cx="14.500" cy="14.500" r="1.700" fill="#e8404a" />
            </svg>
            <Fit w={97} size={24}>分时顶底</Fit>
            <Flag $x={115.5} $y={-12} $w={51} $h={26}><Fit w={39} size={16.5} weight={500}>NEW</Fit></Flag>
          </Chip>
          <Chip>
            <svg width="22" height="20" fill="none" stroke="#e8404a" strokeWidth="2.200" strokeLinecap="round" strokeLinejoin="round">
              <path d="M1.500 18.500L3 13L5.500 14.500L9.500 1.500H20.500" />
            </svg>
            <Fit w={97} size={24}>涨停揭秘</Fit>
          </Chip>
          <Chip>
            <svg width="22" height="18" strokeWidth="2.200" stroke="#3d7be8" strokeLinecap="round">
              <path d="M2 1.800H7M2 6.500H12.500M2 11.200H20" />
              <path d="M2 15.900H7" stroke="#e0565e" />
            </svg>
            <Fit w={97} size={24}>筹码分布</Fit>
          </Chip>
        </Chips>

        <Sectors>
          <SectorTitle>所属<br /><Tinted $c={RED}>板块</Tinted></SectorTitle>
          <SectorList>
            {SECTORS.map(([name, pct, w, c]) => (
              <Sector key={name}>
                <span>{name}</span>
                <Fit w={w} size={25} color={c} weight={500}>{pct}</Fit>
              </Sector>
            ))}
          </SectorList>
        </Sectors>

        <VideoRow>
          <svg width="25" height="25">
            <circle cx="12.500" cy="12" r="11.300" fill="none" stroke="#3b7cf0" strokeWidth="1.900" />
            <path d="M9.500 7.300L17.500 12L9.500 16.700z" fill="#3b7cf0" stroke="#3b7cf0" strokeLinejoin="round" />
          </svg>
          <Gap $w={11} />
          <Fit w={57} size={28.6}>视频</Fit>
          <Gap $w={19} />
          <Rule $w={2.5} $h={21} $c="#333" />
          <Gap $w={21} />
          <Fit w={529} size={28.6}>12.17观点CPO黄金商业航天电网设备白...</Fit>
          <Cross />
        </VideoRow>
        <Band $h={10} />

        <BottomBar>
          <IndexCell>
            <IndexLine $h={32}>
              <Fit w={98} size={28} color={RED} weight={500}>1308.59</Fit>
              <Gap $w={6} />
              <Chevron w={13} h={8} dir="up" sw={1.8} />
            </IndexLine>
            <IndexLine $h={32}>
              <Fit w={66} size={21}>科创50</Fit>
              <Gap $w={8} />
              <Fit w={66} size={21.5} color={RED} weight={500}>+0.20%</Fit>
            </IndexLine>
          </IndexCell>
          <Action>
            买
            <Flag $x={101} $y={-11} $w={55} $h={23}><Fit w={42} size={14} weight={500}>去提速</Fit></Flag>
          </Action>
          <Action>卖</Action>
          <Action>撤</Action>
          <More>
            <svg width="31" height="31">
              <circle cx="15.500" cy="15.500" r="13.800" fill="none" stroke="#3a3a3a" strokeWidth="1.900" />
              <g fill="#3a3a3a"><circle cx="9.500" cy="15.500" r="1.600" /><circle cx="15.500" cy="15.500" r="1.600" /><circle cx="21.500" cy="15.500" r="1.600" /></g>
            </svg>
            更多
          </More>
        </BottomBar>
      </Page>
    </>
  );
}
